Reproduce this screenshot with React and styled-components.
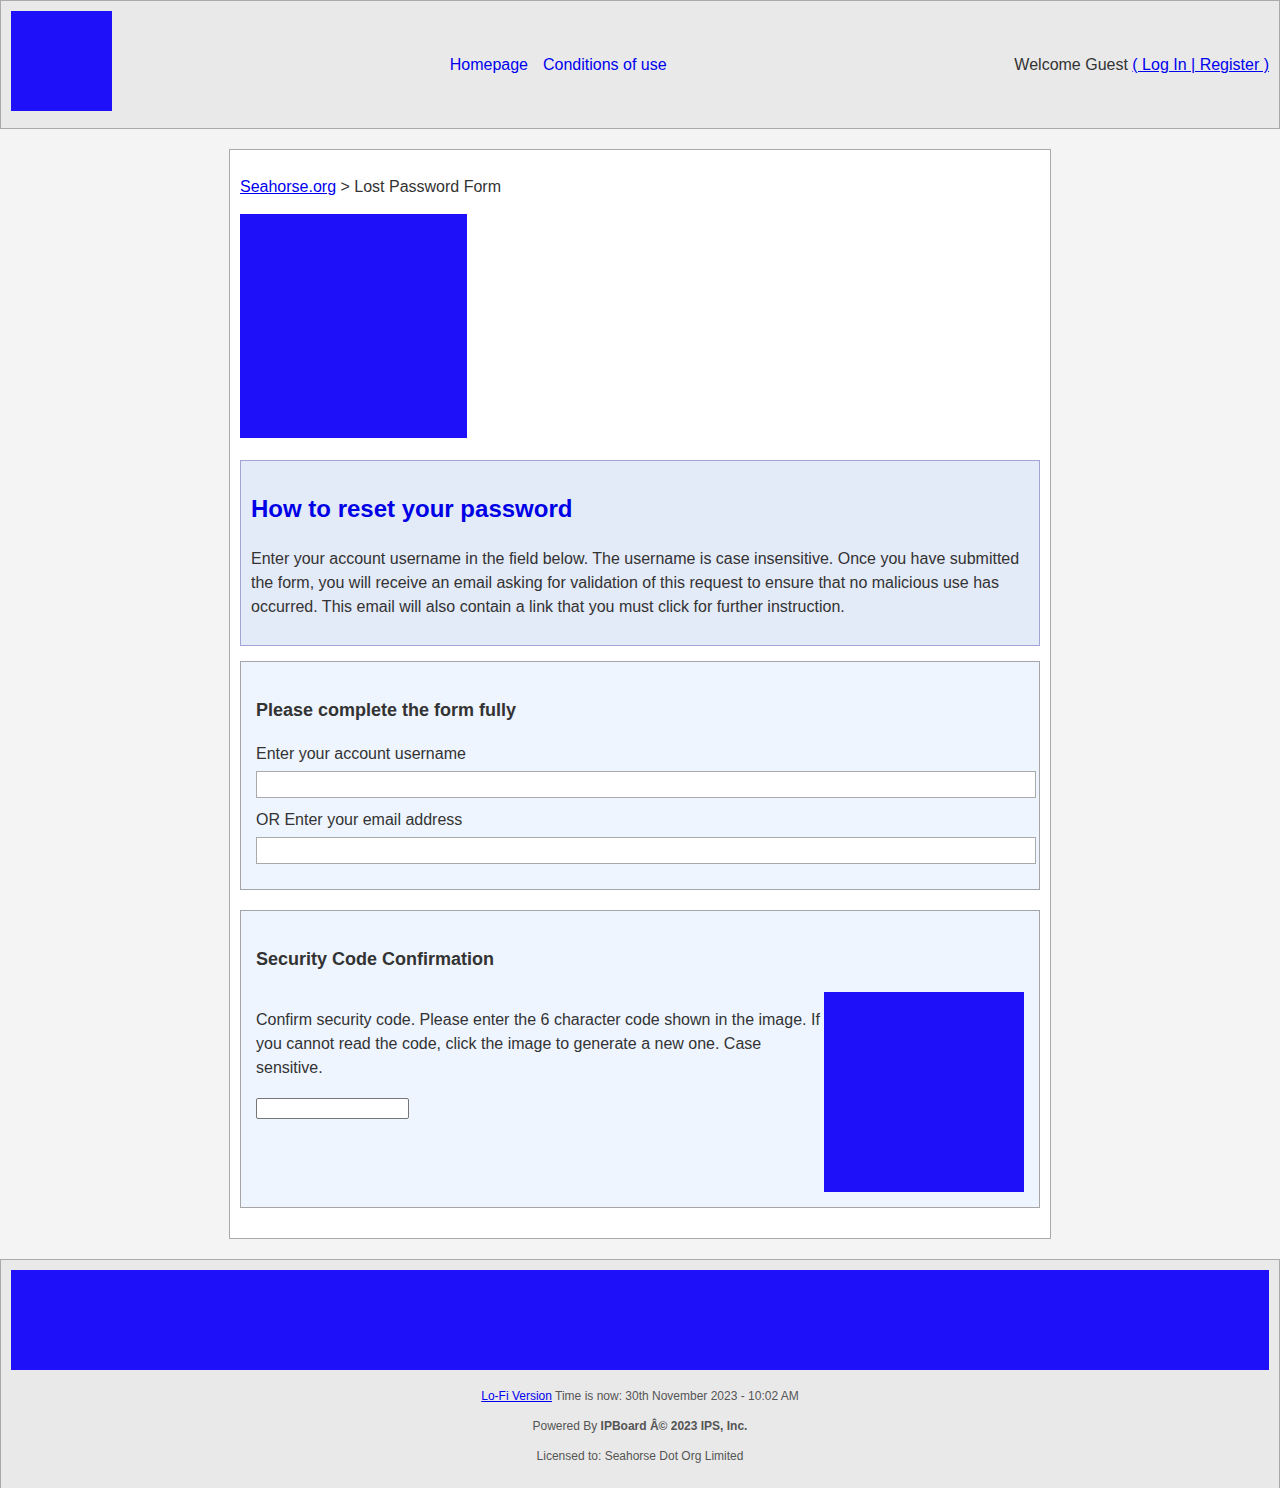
import React from 'react';
import styled, { createGlobalStyle } from 'styled-components';

const GlobalStyle = createGlobalStyle`
  body {
    margin: 0;
    background: #f4f4f4;
    font-family: "Liberation Sans", Arial, sans-serif;
    color: #333;
  }
  a {
    color: #0000ee;
  }
`;

const Header = styled.header`
  display: flex;
  justify-content: space-between;
  align-items: center;
  height: 129px;
  box-sizing: border-box;
  padding: 0 10px;
  background: #e9e9e9;
  border: 1px solid #aaa;
`;

const Placeholder = styled.div`
  background: #1e10f8;
  width: ${(p) => p.$w};
  height: ${(p) => p.$h}px;
  flex-shrink: 0;
`;

const LogoWrap = styled.div`
  align-self: flex-start;
  padding-top: 10px;
`;

const Nav = styled.nav`
  display: flex;
  gap: 15px;
  margin-right: 10px;
  font-size: 16px;

  a {
    color: #0000ee;
    text-decoration: none;
  }
`;

const Welcome = styled.div`
  font-size: 16px;
  color: #333;
`;

const Main = styled.main`
  width: 800px;
  margin: 20px auto;
  padding: 0 10px 30px;
  background: #fff;
  border: 1px solid #aaa;
  overflow: hidden;
`;

const Breadcrumb = styled.div`
  font-size: 16px;
  line-height: 20px;
  margin: 27px 0 17px;
`;

const InfoBox = styled.section`
  margin-top: 22px;
  padding: 10px;
  background: #e3eaf8;
  border: 1px solid #a3a3d8;

  h2 {
    margin: 24px 0 24px;
    font-size: 24px;
    line-height: 28px;
    color: #0000e6;
  }

  p {
    margin: 0 0 16px;
    font-size: 16px;
    line-height: 24px;
  }
`;

const FormBox = styled.section`
  margin-top: ${(p) => p.$top}px;
  padding: 16px 15px ${(p) => p.$bottom}px;
  background: #eef5ff;
  border: 1px solid #a6a6a6;

  h3 {
    margin: 21px 0 ${(p) => p.$headGap}px;
    font-size: 18px;
    line-height: 22px;
    color: #333;
  }
`;

const Label = styled.div`
  font-size: 16px;
  line-height: 24px;
  margin-top: ${(p) => p.$top}px;
`;

const WideInput = styled.input`
  display: block;
  box-sizing: border-box;
  width: 780px;
  height: 27px;
  margin: 5px 0 0;
  border: 1px solid #aaa;
  background: #fff;
`;

const CodeRow = styled.div`
  display: flex;
  justify-content: space-between;
  align-items: flex-start;
`;

const CodeText = styled.div`
  width: 568px;

  p {
    margin: 16px 0 18px;
    font-size: 16px;
    line-height: 24px;
  }
`;

const SmallInput = styled.input`
  display: block;
  box-sizing: border-box;
  width: 153px;
  height: 21px;
  margin: 0;
  border: 1px solid #767676;
  border-radius: 2px;
  background: #fff;
`;

const Footer = styled.footer`
  padding: 10px 10px 11px;
  background: #e9e9e9;
  border: 1px solid #aaa;
`;

const FooterText = styled.div`
  padding-top: 5px;
  text-align: center;
  font-size: 12px;
  color: #555;

  p {
    margin: 12px 0 12px;
    line-height: 18px;
  }
`;

export default function App() {
  return (
    <>
      <GlobalStyle />
      <Header>
        <LogoWrap>
          <Placeholder $w="101px" $h={100} />
        </LogoWrap>
        <Nav>
          <a href="#">Homepage</a>
          <a href="#">Conditions of use</a>
        </Nav>
        <Welcome>
          Welcome Guest <a href="#">( Log In | Register )</a>
        </Welcome>
      </Header>

      <Main>
        <Breadcrumb>
          <a href="#">Seahorse.org</a> &gt; Lost Password Form
        </Breadcrumb>
        <Placeholder $w="227px" $h={224} />

        <InfoBox>
          <h2>How to reset your password</h2>
          <p>
            Enter your account username in the field below. The username is case
            insensitive. Once you have submitted the form, you will receive an
            email asking for validation of this request to ensure that no
            malicious use has occurred. This email will also contain a link that
            you must click for further instruction.
          </p>
        </InfoBox>

        <FormBox $top={15} $headGap={21} $bottom={25}>
          <h3>Please complete the form fully</h3>
          <Label $top={0}>Enter your account username</Label>
          <WideInput type="text" />
          <Label $top={10}>OR Enter your email address</Label>
          <WideInput type="text" />
        </FormBox>

        <FormBox $top={20} $headGap={22} $bottom={15}>
          <h3>Security Code Confirmation</h3>
          <CodeRow>
            <CodeText>
              <p>
                Confirm security code. Please enter the 6 character code shown in
                the image. If you cannot read the code, click the image to
                generate a new one. Case sensitive.
              </p>
              <SmallInput type="text" />
            </CodeText>
            <Placeholder $w="200px" $h={200} />
          </CodeRow>
        </FormBox>
      </Main>

      <Footer>
        <Placeholder $w="100%" $h={100} />
        <FooterText>
          <p>
            <a href="#">Lo-Fi Version</a> Time is now: 30th November 2023 - 10:02 AM
          </p>
          <p>
            Powered By <b>IPBoard Â© 2023 IPS, Inc.</b>
          </p>
          <p>Licensed to: Seahorse Dot Org Limited</p>
        </FooterText>
      </Footer>
    </>
  );
}
